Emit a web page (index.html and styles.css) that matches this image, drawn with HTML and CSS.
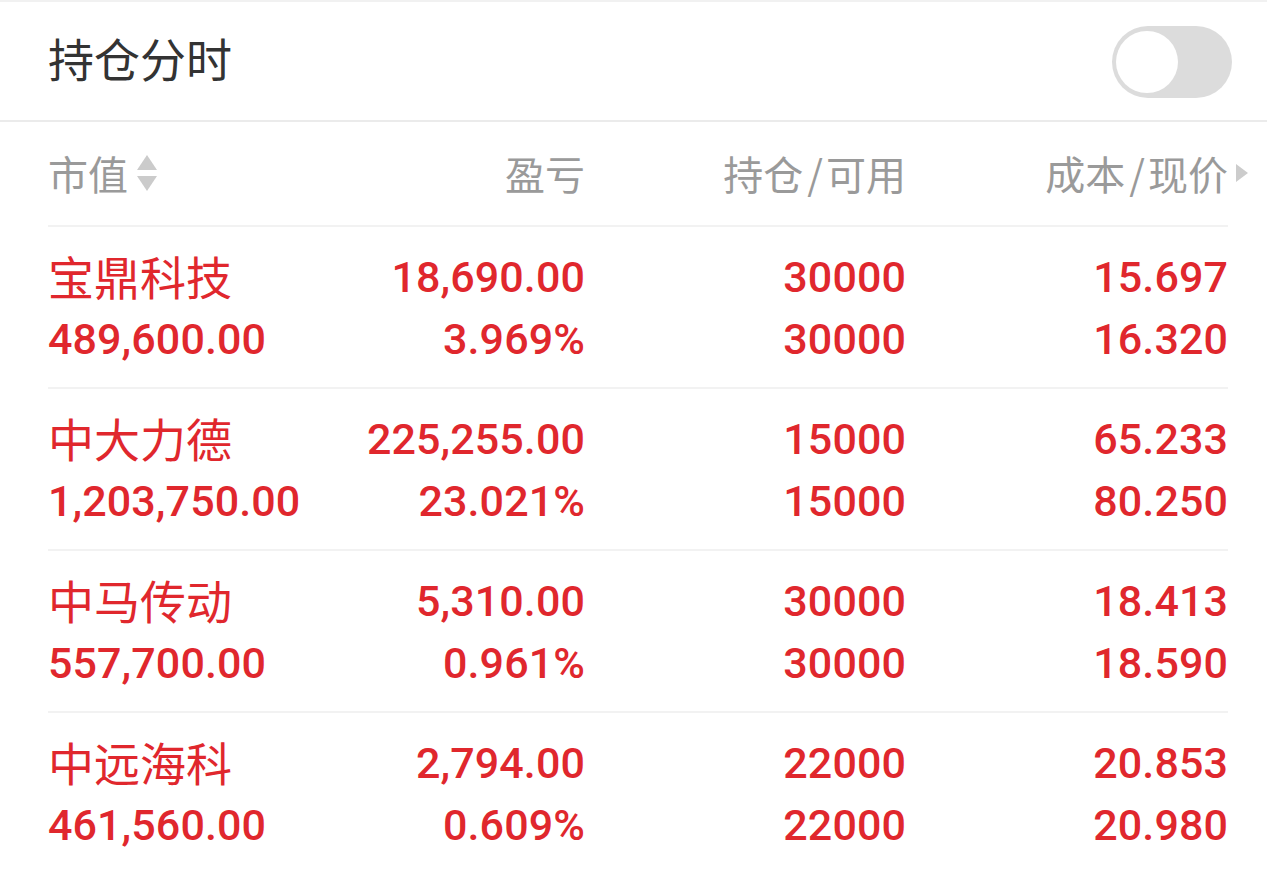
FILE: index.html
```html
<!DOCTYPE html>
<html lang="zh-CN">
<head>
<meta charset="utf-8">
<title>持仓分时</title>
<link rel="stylesheet" href="styles.css">
</head>
<body>
<div class="page">
  <header class="top-bar">
    <h1 class="title">持仓分时</h1>
    <div class="toggle"><span class="knob"></span></div>
  </header>

  <section class="table">
    <div class="head-row">
      <div class="hcell left">市值<svg class="sort-icon" width="20" height="37" viewBox="0 0 20 37"><polygon points="10,0 20,15 0,15" fill="#cbcbcb"/><polygon points="0,21 20,21 10,36" fill="#cbcbcb"/></svg></div>
      <div class="hcell">盈亏</div>
      <div class="hcell">持仓<span class="slash">/</span>可用</div>
      <div class="hcell">成本<span class="slash">/</span>现价<svg class="more-icon" width="12" height="18" viewBox="0 0 12 18"><polygon points="0,0 12,9 0,18" fill="#cccccc"/></svg></div>
    </div>

    <div class="row">
      <div class="cell name">宝鼎科技</div>
      <div class="cell num">18,690.00</div>
      <div class="cell num">30000</div>
      <div class="cell num">15.697</div>
      <div class="cell num left">489,600.00</div>
      <div class="cell num">3.969%</div>
      <div class="cell num">30000</div>
      <div class="cell num">16.320</div>
    </div>

    <div class="row">
      <div class="cell name">中大力德</div>
      <div class="cell num">225,255.00</div>
      <div class="cell num">15000</div>
      <div class="cell num">65.233</div>
      <div class="cell num left">1,203,750.00</div>
      <div class="cell num">23.021%</div>
      <div class="cell num">15000</div>
      <div class="cell num">80.250</div>
    </div>

    <div class="row">
      <div class="cell name">中马传动</div>
      <div class="cell num">5,310.00</div>
      <div class="cell num">30000</div>
      <div class="cell num">18.413</div>
      <div class="cell num left">557,700.00</div>
      <div class="cell num">0.961%</div>
      <div class="cell num">30000</div>
      <div class="cell num">18.590</div>
    </div>

    <div class="row last">
      <div class="cell name">中远海科</div>
      <div class="cell num">2,794.00</div>
      <div class="cell num">22000</div>
      <div class="cell num">20.853</div>
      <div class="cell num left">461,560.00</div>
      <div class="cell num">0.609%</div>
      <div class="cell num">22000</div>
      <div class="cell num">20.980</div>
    </div>
  </section>
</div>
</body>
</html>
```

FILE: styles.css
```css
* { box-sizing: border-box; }

html, body {
  margin: 0;
  padding: 0;
  background: #ffffff;
}

body {
  font-family: "Noto Sans CJK SC", "Noto Sans", sans-serif;
  overflow: hidden;
}

.page {
  width: 1267px;
  border-top: 2px solid #f1f1f1;
}

.top-bar {
  height: 120px;
  display: flex;
  align-items: center;
  justify-content: space-between;
  padding: 0 35px 0 48px;
  border-bottom: 2px solid #ebebeb;
}

.title {
  margin: 0 0 8px;
  font-size: 46px;
  font-weight: 400;
  color: #333333;
  line-height: 1;
}

.toggle {
  width: 120px;
  height: 72px;
  border-radius: 36px;
  background: #dcdcdc;
  display: flex;
  align-items: center;
  padding: 0 4px;
  margin-top: 1px;
}

.knob {
  width: 62px;
  height: 62px;
  border-radius: 50%;
  background: #ffffff;
}

.table {
  margin: 0 39px 0 48px;
}

.head-row,
.row {
  display: grid;
  grid-template-columns: 252px 285px 321px 322px;
}

.head-row {
  height: 105px;
  align-items: center;
  border-bottom: 2px solid #f2f2f2;
}

.hcell {
  font-size: 40px;
  color: #9a9a9a;
  line-height: 1;
  display: flex;
  align-items: center;
  justify-content: flex-end;
  padding-bottom: 2px;
}

.hcell.left {
  justify-content: flex-start;
}

.slash {
  margin: 0 3px 0 4px;
}

.sort-icon {
  margin-left: 9px;
  margin-top: 2px;
}

.more-icon {
  margin-left: 8px;
  margin-right: -20px;
  margin-top: 0;
}

.row {
  height: 162px;
  padding: 19px 0 17px;
  border-bottom: 2px solid #f2f2f2;
  grid-auto-rows: 62px;
  color: #e0272d;
}

.row.last {
  border-bottom: none;
}

.cell {
  display: flex;
  align-items: center;
  justify-content: flex-end;
  white-space: nowrap;
  line-height: 1;
}

.cell.name {
  justify-content: flex-start;
  font-size: 46px;
  font-weight: 400;
  padding-bottom: 4px;
}

.cell.num {
  font-family: "Roboto", "Liberation Sans", sans-serif;
  font-size: 43px;
  font-weight: 500;
  letter-spacing: 0.1px;
}

.cell.num.left {
  justify-content: flex-start;
}
```
